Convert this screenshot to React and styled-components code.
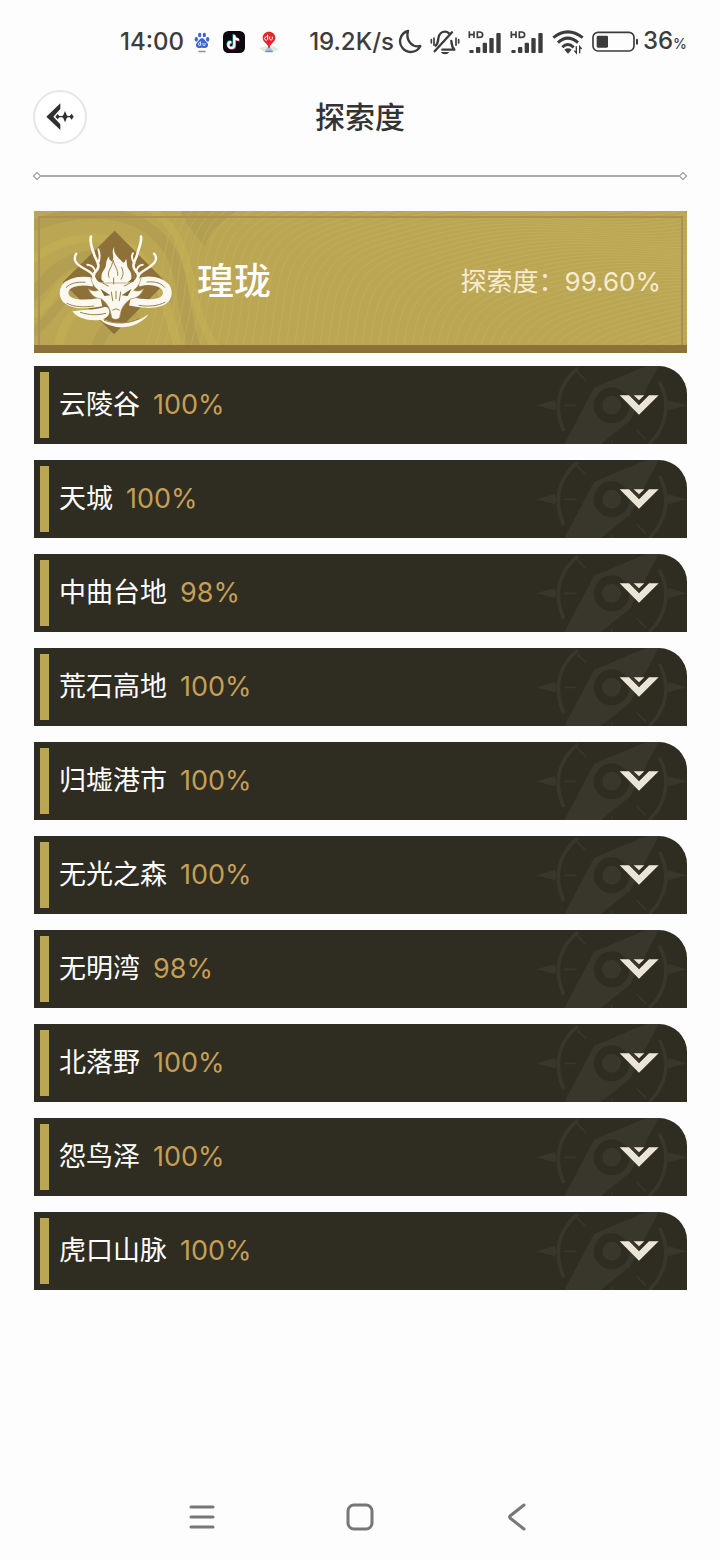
import React from 'react';
import styled, { createGlobalStyle } from 'styled-components';

const areas = [
  { id: 1, name: '云陵谷', percent: '100%' },
  { id: 2, name: '天城', percent: '100%' },
  { id: 3, name: '中曲台地', percent: '98%' },
  { id: 4, name: '荒石高地', percent: '100%' },
  { id: 5, name: '归墟港市', percent: '100%' },
  { id: 6, name: '无光之森', percent: '100%' },
  { id: 7, name: '无明湾', percent: '98%' },
  { id: 8, name: '北落野', percent: '100%' },
  { id: 9, name: '怨鸟泽', percent: '100%' },
  { id: 10, name: '虎口山脉', percent: '100%' }
];

// Status bar icons

const Paw = () => (
  <svg width="16" height="22" viewBox="0 0 48 66">
    <g fill="#3b66d6">
      <ellipse cx="7" cy="25" rx="5" ry="7" />
      <ellipse cx="17" cy="12" rx="5" ry="7" />
      <ellipse cx="31" cy="12" rx="5" ry="7" />
      <ellipse cx="41" cy="25" rx="5" ry="7" />
      <path d="M24 22c8 0 9 8 14 12 7 6 5 17-5 17-4 0-6-1-9-1s-5 1-9 1C5 51 3 40 10 34c5-4 6-12 14-12z" />
    </g>
    <path d="M20 31v12M20 37a4 4 0 1 0 0 5M27 36v5q0 3 3 3t3-3v-5" fill="none" stroke="#fff" strokeWidth="2.5" />
    <rect x="13" y="59" width="22" height="5" rx="2" fill="#8f8f98" />
  </svg>
);

const Note = () => (
  <svg width="22" height="22" viewBox="0 0 66 66">
    <rect width="66" height="66" rx="16" fill="#0c0910" />
    <g fill="none" strokeWidth="6.5">
      <path d="M34 12v30a9 9 0 1 1-9-9M34 14c1 8 6 12 14 12" stroke="#35d5dc" transform="translate(-2 -2)" />
      <path d="M34 12v30a9 9 0 1 1-9-9M34 14c1 8 6 12 14 12" stroke="#f0345c" transform="translate(2 2)" />
      <path d="M34 12v30a9 9 0 1 1-9-9M34 14c1 8 6 12 14 12" stroke="#fff" />
    </g>
  </svg>
);

const Pin = () => (
  <svg width="22" height="22" viewBox="0 0 66 66">
    <path d="M3 52l18-6 12 4 14-5 16 10-14 6H16z" fill="#dfeadb" />
    <path d="M33 44l14 18H19z" fill="#a7bfe2" />
    <rect x="22" y="59" width="22" height="5" rx="2" fill="#7d8fae" />
    <path d="M33 2c11 0 19 8 19 18 0 12-13 17-17 27h-4C27 37 14 32 14 20 14 10 22 2 33 2z" fill="#e0262f" />
    <path d="M29 11v15M29 20a5 5 0 1 0 0 5M35 17v6q0 4 4 4t4-4v-6" fill="none" stroke="#fff" strokeWidth="3" />
    <circle cx="33" cy="48" r="3" fill="#e0262f" />
  </svg>
);

const Moon = () => (
  <svg width="24" height="26" viewBox="0 0 72 78">
    <path d="M30 6A32 32 0 1 0 67 51C44 57 22 36 30 6z" fill="none" stroke="#3c3c3c" strokeWidth="7" strokeLinejoin="round" />
  </svg>
);

const Muted = () => (
  <svg width="30" height="26" viewBox="0 0 90 78">
    <g fill="none" stroke="#3c3c3c" strokeWidth="7" strokeLinecap="round" strokeLinejoin="round">
      <path d="M66 10L14 67" />
      <path d="M17 50c7-6 7-12 8-22C27 14 37 8 45 8c5 0 9 2 12 5" />
      <path d="M37 62h36c-8-8-8-14-9-26" />
      <path d="M12 27v22M4 32v10M78 27v22M86 32v10" strokeWidth="5" />
    </g>
    <path d="M32 69h26q-4 7-13 7t-13-7z" fill="#3c3c3c" />
  </svg>
);

const Signal = () => (
  <svg width="34" height="24" viewBox="0 0 102 72">
    <g fill="none" stroke="#3c3c3c" strokeWidth="5">
      <path d="M4 4v20M18 4v20M4 14h14M28 6v16h6q10 0 10-8t-10-8z" />
    </g>
    <g fill="#3c3c3c">
      <rect x="4" y="60" width="13" height="9" rx="3" />
      <rect x="24" y="51" width="13" height="18" rx="3" />
      <rect x="44" y="38" width="13" height="31" rx="3" />
      <rect x="64" y="24" width="13" height="45" rx="3" />
      <rect x="85" y="9" width="13" height="60" rx="3" />
    </g>
  </svg>
);

const Wifi = () => (
  <svg width="32" height="26" viewBox="0 0 96 78">
    <g fill="none" stroke="#3c3c3c" strokeWidth="9">
      <path d="M4 26Q47-9 92 26" />
      <path d="M18 41Q47 14 78 41" />
      <path d="M31 55Q47 38 65 55" />
    </g>
    <path d="M37 62q11-8 22 0L48 74z" fill="#3c3c3c" />
    <path d="M73 52v20l-6-7M83 73V53l6 7" fill="none" stroke="#3c3c3c" strokeWidth="4" />
  </svg>
);

const Battery = () => (
  <svg width="47" height="22" viewBox="0 0 141 66">
    <rect x="3" y="4" width="123" height="56" rx="15" fill="none" stroke="#3c3c3c" strokeWidth="5" />
    <rect x="14" y="14" width="34" height="36" rx="4" fill="#3c3c3c" />
    <rect x="132" y="23" width="6" height="18" rx="3" fill="#3c3c3c" />
  </svg>
);

const BackArrow = () => (
  <svg width="28" height="28" viewBox="0 0 84 84">
    <path d="M43 1v17L22 41l21 23v17L1 41z" fill="#303030" />
    <path d="M28 41l7-8 5 6h9l3-3 5-12 5 12 3 3h6l6-7 6 9-6 9-6-7h-6l-3 3-5 12-5-12-3-3h-9l-5 6z" fill="#303030" />
  </svg>
);

// Dragon crest on the banner
const Crest = () => (
  <svg width="117" height="107" viewBox="80 75 351 321">
    <path d="M253 80L407 235 251 391 97 235z" fill="#8d7138" />
    <g fill="none" stroke="#fbf8f0" strokeWidth="26">
      <path d="M190 235C138 224 100 240 101 268c2 32 52 38 112 26" />
      <path d="M324 235c46-13 88 4 87 33-2 33-54 37-112 24" />
    </g>
    <g fill="#fbf8f0">
      <path d="M126 322c32-6 62-2 94-12 12-3 18 5 17 16-2 15-22 23-44 23-28 0-52-8-67-27z" />
      <path d="M205 340c44 22 99 26 150-9-25 33-66 43-100 37-22-4-40-12-50-28z" />
      <path d="M252 128c-12 18 4 32-8 44-7-3-8-9-7-15-14 14-6 27-15 39-12 14-10 32-4 50h78c9-19 10-37 1-48-10-12-5-22-10-34-3 6-2 11-8 12-15-14-32-28-27-48z" />
    </g>
    {/* head: crown, cheeks, snout */}
    <path
      d="M174 254c12 8 22 8 30 5-12-10-21-22-22-40 12 12 28 16 40 18h70c12-2 28-6 40-18-1 18-10 30-22 40 8 3 18 3 30-5-8 19-20 29-38 30-12 8-24 20-29 34l-5 22c-2 8-22 8-24 0l-5-22c-5-14-15-26-27-34-18-1-30-11-38-30z"
      fill="#fbf8f0"
      stroke="#a58c55"
      strokeWidth="2"
    />
    <g fill="none" stroke="#fbf8f0" strokeLinecap="round">
      <path d="M224 250c-36-18-42-38-24-52 12-18-5-30-9-48-6-20-14-32-9-52" strokeWidth="8" />
      <path d="M290 250c36-19 41-38 24-52-12-16 3-30 7-48 4-20 14-32 11-52" strokeWidth="8" />
      <path d="M192 226c-4-21-18-25-34-34-20-11-32-25-20-43" strokeWidth="7" />
      <path d="M322 226c2-20 16-24 31-34 18-12 33-27 18-43" strokeWidth="7" />
      <path d="M196 204c-4-14-11-21-25-22M202 180c10-18 6-32 2-44M317 204c3-13 7-21 20-22M312 178c-10-15-9-22-4-30" strokeWidth="6" />
    </g>
    <g fill="none" stroke="#9b8148" strokeWidth="3" strokeLinecap="round">
      <path d="M236 220c-8-20 10-28 12-52 4 18 16 28 14 46M272 226c8-12 8-22 2-36M250 240v-18" />
      <path d="M257 262v22M243 264l4 26M271 264l-4 26M247 318q10-8 20 0" />
      <path d="M234 246c-28-12-34-24-28-42M282 246c28-12 34-24 28-42" />
      <path d="M190 306c-26 4-58 4-80-8M326 304c28 5 56 2 78-9M150 325c28 9 54 9 76 3M222 349c35 13 76 10 104-5" />
      <path d="M108 250c13-13 33-17 56-15M350 234c27-3 44 5 53 16" />
    </g>
    <path d="M210 254l30 20-18 2zM304 254l-30 20 18 2zM206 222l16 13-19-3zM308 222l-16 13 19-3z" fill="#7e6531" />
  </svg>
);

// contour lines climb the banner and then run off to the right
const contours = Array.from({ length: 66 }, (_, i) => i);

const Waves = () => (
  <WavesSvg viewBox="0 0 653 142" preserveAspectRatio="none" aria-hidden="true">
    <rect width="653" height="142" fill="#bba654" />
    <g fill="none" stroke="#b39f52">
      <path d="M-10 20C40 -6 110 -8 138 46c14 30 10 64 24 104" strokeWidth="12" />
      <path d="M-10 92C14 84 14 52 62 48c30-2 60 14 70 50" strokeWidth="14" />
      <path d="M-8 132c22-8 26-34 52-48" strokeWidth="9" />
      <path d="M62 150c4-26 18-34 40-44" strokeWidth="12" />
    </g>
    <path d="M146 0h58c-16 10-28 20-33 38C162 26 152 14 146 0z" fill="#b39f52" />
    <g fill="none" stroke="#bfac53">
      <path d="M-10 60C14 34 60 16 98 40c26 20 34 60 48 110" strokeWidth="9" />
      <path d="M112 -6c36 24 40 56 46 84 4 24 12 50 26 70" strokeWidth="8" />
      <path d="M-6 112c26-8 22-36 52-46" strokeWidth="8" />
      <path d="M24 150c2-30 14-44 38-58" strokeWidth="9" />
    </g>
    <g fill="none" stroke="#c9b968" opacity=".45">
      {contours.map((i) => (
        <path
          key={i}
          d="M0 170C34 70 0 20 80-6S200-34 290-24 420-50 560-40"
          transform={`translate(${110 + i * 8} ${i * 3 - 20})`}
        />
      ))}
    </g>
  </WavesSvg>
);

const Compass = () => (
  <CompassSvg width="151" height="78" viewBox="48 19 453 234" aria-hidden="true">
    <g fill="#39362c">
      <path d="M378 19L222 84 133 253h110l87-70 86-164z" />
      <path d="M48 137l56-16q10 16 0 31zM501 137l-56-16q-10 16 0 31z" />
    </g>
    <g fill="none" stroke="#39362c" strokeWidth="11">
      <path d="M174 25C121 68 96 132 131 214" />
      <path d="M418 66C452 130 441 202 388 253" />
    </g>
    <g fill="none" stroke="#39362c" strokeWidth="5">
      <path d="M133 137h36M171 36l26 26M350 212l28 28M275 242v11" />
    </g>
    <circle cx="275" cy="137" r="41" fill="#39362c" stroke="#2f2c22" strokeWidth="25" />
    <path d="M299 107h28l30 30 30-30h29l-59 58zM341 107h32l-16 15z" fill="#ebe5d7" />
  </CompassSvg>
);

const App = () => {
  return (
    <Page>
      <GlobalStyle />
      <StatusBar>
        <StatusGroup>
          <StatusText>14:00</StatusText>
          <AppIcons>
            <Paw />
            <Note />
            <Pin />
          </AppIcons>
        </StatusGroup>
        <StatusGroup>
          <StatusText>19.2K/s</StatusText>
          <SystemIcons>
            <Moon />
            <Muted />
            <Signal />
            <Signal />
            <Wifi />
            <Battery />
          </SystemIcons>
          <StatusText>
            36<small>%</small>
          </StatusText>
        </StatusGroup>
      </StatusBar>

      <Header>
        <BackButton type="button" aria-label="返回">
          <BackArrow />
        </BackButton>
        <Title>探索度</Title>
      </Header>
      <Divider />

      <Main>
        <Banner>
          <Waves />
          <BannerFrame />
          <BannerBody>
            <Crest />
            <Region>瑝珑</Region>
            <Total>探索度：99.60%</Total>
          </BannerBody>
        </Banner>
        <AreaList>
          {areas.map((area) => (
            <li key={area.id}>
              <AreaButton type="button" aria-expanded="false">
                <Compass />
                <Marker />
                <AreaName>{area.name}</AreaName>
                <Percent>{area.percent}</Percent>
              </AreaButton>
            </li>
          ))}
        </AreaList>
      </Main>

      <NavBar>
        <NavButton type="button" aria-label="菜单">
          <svg width="28" height="28" viewBox="0 0 28 28">
            <path d="M3 4h22M3 14h22M3 24h22" />
          </svg>
        </NavButton>
        <NavButton type="button" aria-label="主页">
          <svg width="28" height="28" viewBox="0 0 28 28">
            <rect x="2" y="2" width="24" height="24" rx="6" />
          </svg>
        </NavButton>
        <NavButton type="button" aria-label="后退">
          <svg width="28" height="28" viewBox="0 0 28 28">
            <path d="M20 2L6 13q-1 1 0 2l14 11" />
          </svg>
        </NavButton>
      </NavBar>
    </Page>
  );
};

const GlobalStyle = createGlobalStyle`
  *,
  *::before,
  *::after {
    box-sizing: border-box;
    margin: 0;
    padding: 0;
  }
  body {
    background: #fdfdfd;
    font-family: Inter, 'Noto Sans CJK SC', sans-serif;
  }
  button {
    border: none;
    background: none;
    font: inherit;
    cursor: pointer;
  }
  svg {
    flex: none;
    display: block;
  }
`;

const Page = styled.div`
  display: flex;
  flex-direction: column;
  min-height: 100vh;
`;

const StatusBar = styled.div`
  display: flex;
  justify-content: space-between;
  height: 84px;
  padding: 0 33px 0 120px;
`;

const StatusGroup = styled.div`
  display: flex;
  align-items: center;
`;

const StatusText = styled.span`
  color: #3c3c3c;
  font-size: 24px;
  font-weight: 500;
  line-height: 32px;
  small {
    font-size: 14px;
  }
`;

const AppIcons = styled.div`
  display: flex;
  align-items: center;
  gap: 13px;
  margin-left: 10px;
`;

const SystemIcons = styled.div`
  display: flex;
  align-items: center;
  gap: 8px;
  margin: 0 4px;
`;

const Header = styled.header`
  display: grid;
  grid-template-columns: 54px 1fr 54px;
  align-items: center;
  padding: 6px 33px;
`;

const BackButton = styled.button`
  display: flex;
  align-items: center;
  justify-content: center;
  height: 54px;
  border: 2px solid #e6e6e6;
  border-radius: 50%;
  background: #fff;
`;

const Title = styled.h1`
  color: #333;
  font-size: 30px;
  font-weight: 500;
  line-height: 40px;
  text-align: center;
`;

const Divider = styled.div`
  display: flex;
  align-items: center;
  justify-content: space-between;
  height: 8px;
  margin: 22px 34px 0;
  background: linear-gradient(#a9a9a9, #a9a9a9) center / calc(100% - 14px) 2px no-repeat;
  &::before,
  &::after {
    content: '';
    width: 6px;
    height: 6px;
    border: 1px solid #8f8f8f;
    transform: rotate(45deg);
  }
`;

const Main = styled.main`
  padding: 31px 33px 0 34px;
`;

const Banner = styled.section`
  position: relative;
  height: 142px;
  border-bottom: 8px solid #8d7138;
`;

const WavesSvg = styled.svg`
  position: absolute;
  inset: 0;
  width: 100%;
  height: 100%;
`;

const BannerFrame = styled.div`
  position: absolute;
  inset: 5px 4px 0;
  border: 2px solid #ae9150;
  border-bottom: none;
`;

const BannerBody = styled.div`
  position: relative;
  display: flex;
  align-items: center;
  height: 100%;
  padding: 8px 26px 0 23px;
`;

const Region = styled.h2`
  margin-left: 23px;
  color: #fff;
  font-size: 37px;
  font-weight: 500;
  line-height: 48px;
`;

const Total = styled.p`
  margin-left: auto;
  color: #f6ead0;
  font-size: 26px;
  line-height: 40px;
`;

const AreaList = styled.ul`
  display: flex;
  flex-direction: column;
  gap: 16px;
  margin-top: 13px;
  list-style: none;
`;

const AreaButton = styled.button`
  position: relative;
  display: flex;
  align-items: center;
  width: 100%;
  height: 78px;
  padding: 0 6px;
  overflow: hidden;
  border-radius: 0 28px 0 0;
  background: #2f2c22;
  font-size: 27px;
  line-height: 40px;
`;

const CompassSvg = styled.svg`
  position: absolute;
  top: 0;
  right: 0;
`;

const Marker = styled.span`
  width: 9px;
  height: 66px;
  background: #bba654;
`;

const AreaName = styled.span`
  margin-left: 10px;
  color: #fff;
`;

const Percent = styled.span`
  margin-left: 13px;
  color: #c49f55;
`;

const NavBar = styled.nav`
  display: flex;
  justify-content: center;
  gap: 130px;
  margin-top: auto;
  padding: 29px 0;
`;

const NavButton = styled.button`
  svg {
    fill: none;
    stroke: #777;
    stroke-width: 3;
    stroke-linecap: round;
    stroke-linejoin: round;
  }
`;

export default App;
